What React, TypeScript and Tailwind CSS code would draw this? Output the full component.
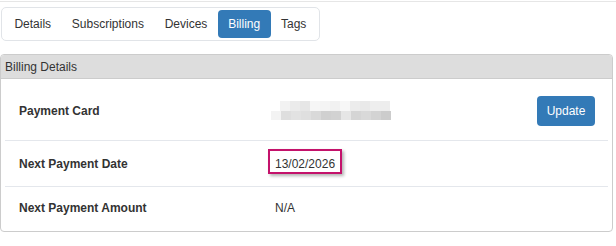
import React from "react";

const topRow = ["#f2f2f2", "#ebebeb", "#e6e6e6", "#f6f6f6", "#f4f4f4", "#f1f1f1", "#f7f7f7", "#ececec", "#e9e9e9", "#eeeeee", "#ededed"];
const bottomRow = ["#f3f3f3", "#dedede", "#e2e2e2", "#dfdfdf", "#d9d9d9", "#d0d0d0", "#d2d2d2", "#e6e6e6", "#d5d5d5", "#d9d9d9", "#d3d3d3", "#cccccc"];

function Blur() {
  return (
    <svg width="120" height="20" viewBox="0 0 120 20" className="block">
      {topRow.map((c, i) => (
        <rect key={"t" + i} x={9 + i * 10} y={0} width={10} height={10} fill={c} />
      ))}
      {bottomRow.map((c, i) => (
        <rect key={"b" + i} x={i * 10} y={10} width={10} height={9} fill={c} />
      ))}
    </svg>
  );
}

const tabs = ["Details", "Subscriptions", "Devices", "Billing", "Tags"];

export default function App() {
  return (
    <div
      className="w-[616px] h-[246px] bg-white text-[#333] text-[12px] overflow-hidden"
      style={{ fontFamily: '"Liberation Sans", Arial, Helvetica, sans-serif' }}
    >
      <div className="mt-px h-px bg-[#e6e6e6]" />
      <div className="mt-[5px] ml-px inline-flex p-[2px] border border-[#e1e4e8] rounded-[5px]">
        {tabs.map((t) => (
          <div
            key={t}
            className={
              "h-[28px] px-[10.4px] flex items-center rounded-[4px] " +
              (t === "Billing" ? "bg-[#337ab7] text-white" : "text-[#333]")
            }
          >
            {t}
          </div>
        ))}
      </div>
      <div className="mt-[13px] w-[613px] border border-[#cccccc] rounded-[4px] overflow-hidden">
        <div className="h-[24px] bg-[#dddddd] border-b border-[#cccccc] flex items-center pl-[4px]">
          Billing Details
        </div>
        <div className="mx-[4px] pb-[2px]">
          <div className="h-[62px] pt-[3px] flex items-center border-b border-[#e4e7ec]">
            <div className="w-[270px] pl-[14px] font-bold">Payment Card</div>
            <div className="flex-1 -ml-[4px]">
              <Blur />
            </div>
            <button className="mr-[13px] w-[58px] h-[30px] rounded-[4px] bg-[#337ab7] text-white">
              Update
            </button>
          </div>
          <div className="h-[46px] flex items-center border-b border-[#e4e7ec]">
            <div className="w-[270px] pl-[14px] font-bold">Next Payment Date</div>
            <div className="relative">
              <span>13/02/2026</span>
              <span className="absolute -left-[7px] -top-[6px] w-[74px] h-[25px] border-2 border-[#c4126b] shadow-[2px_2px_3px_rgba(0,0,0,0.3)]" />
            </div>
          </div>
          <div className="h-[42px] flex items-center">
            <div className="w-[270px] pl-[14px] font-bold">Next Payment Amount</div>
            <div>N/A</div>
          </div>
        </div>
      </div>
    </div>
  );
}
